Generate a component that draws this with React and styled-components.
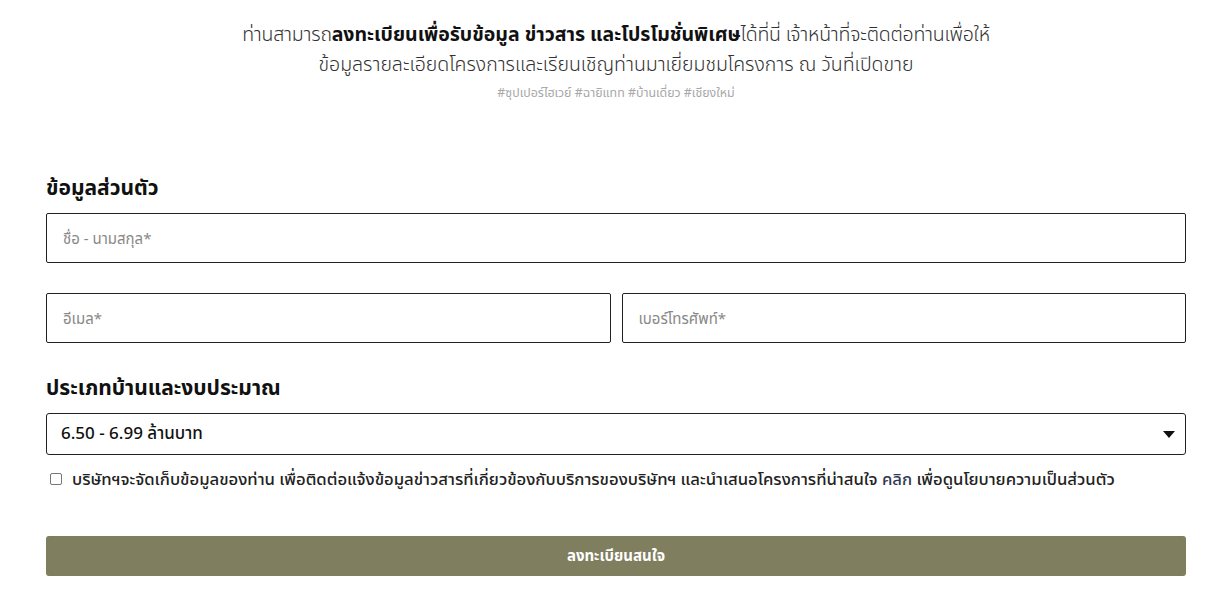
import React from "react";
import styled, { createGlobalStyle } from "styled-components";

const Global = createGlobalStyle`
  body {
    margin: 0;
    background: #fff;
    font-family: "Noto Sans", "Noto Sans Thai", "Leelawadee UI", Tahoma, sans-serif;
    color: #111;
  }
`;

const Page = styled.div`
  width: 1140px;
  margin: 0 auto;
  padding-top: 19px;
`;

const Intro = styled.div`
  text-align: center;
  color: #333;
`;

const IntroLine = styled.p`
  margin: 0;
  font-size: 19.5px;
  line-height: 30px;
  font-weight: 300;
  letter-spacing: ${(p) => (p.$tight ? "-0.2px" : "0")};
  b {
    font-weight: 700;
    color: #111;
    letter-spacing: 0;
  }
`;

const Tags = styled.p`
  margin: 5px 0 0;
  font-size: 12.4px;
  line-height: 18px;
  color: #a8a8a8;
`;

const Heading = styled.h3`
  margin: ${(p) => p.$top}px 0 12px;
  font-size: 21px;
  line-height: 28px;
  font-weight: 700;
  color: #111;
`;

const Input = styled.input`
  box-sizing: border-box;
  width: 100%;
  height: 50px;
  padding: 0 16px;
  border: 1px solid #222;
  border-radius: 2px;
  font-family: inherit;
  font-size: 15px;
  color: #222;
  outline: none;
  &::placeholder {
    color: #888;
  }
`;

const Row = styled.div`
  display: grid;
  grid-template-columns: 1fr 1fr;
  gap: 11px;
  margin-top: 30px;
`;

const SelectBox = styled.div`
  box-sizing: border-box;
  height: 42px;
  border: 1px solid #222;
  border-radius: 3px;
  display: flex;
  align-items: center;
  padding: 0 14px;
  font-size: 17px;
  font-weight: 500;
  color: #111;
`;

const Caret = styled.span`
  margin-left: auto;
  width: 0;
  height: 0;
  border-left: 6px solid transparent;
  border-right: 6px solid transparent;
  border-top: 7px solid #111;
  margin-right: -4px;
`;

const Consent = styled.label`
  display: flex;
  align-items: center;
  gap: 10px;
  margin-top: 12px;
  padding-left: 4px;
  font-size: 16.7px;
  line-height: 23px;
  font-weight: 500;
  color: #222;
`;

const Check = styled.span`
  box-sizing: border-box;
  width: 12px;
  height: 12px;
  border: 1px solid #777;
  border-radius: 2px;
  flex: none;
`;

const Link = styled.a`
  color: #2f3a52;
  text-decoration: none;
`;

const Submit = styled.button`
  display: block;
  width: 100%;
  height: 40px;
  margin-top: 46px;
  border: none;
  border-radius: 3px;
  background: #7f7e5e;
  color: #fff;
  font-family: inherit;
  font-size: 15px;
  font-weight: 700;
`;

export default function App() {
  return (
    <Page>
      <Global />
      <Intro>
        <IntroLine $tight>
          ท่านสามารถ<b>ลงทะเบียนเพื่อรับข้อมูล ข่าวสาร และโปรโมชั่นพิเศษ</b>ได้ที่นี่ เจ้าหน้าที่จะติดต่อท่านเพื่อให้
        </IntroLine>
        <IntroLine>ข้อมูลรายละเอียดโครงการและเรียนเชิญท่านมาเยี่ยมชมโครงการ ณ วันที่เปิดขาย</IntroLine>
        <Tags>#ซุปเปอร์ไฮเวย์ #ฉายิแทท #บ้านเดี่ยว #เชียงใหม่</Tags>
      </Intro>

      <Heading $top={71}>ข้อมูลส่วนตัว</Heading>
      <Input placeholder="ชื่อ - นามสกุล*" />
      <Row>
        <Input placeholder="อีเมล*" />
        <Input placeholder="เบอร์โทรศัพท์*" />
      </Row>

      <Heading $top={30}>ประเภทบ้านและงบประมาณ</Heading>
      <SelectBox>
        6.50 - 6.99 ล้านบาท
        <Caret />
      </SelectBox>

      <Consent>
        <Check />
        <span>
          บริษัทฯจะจัดเก็บข้อมูลของท่าน เพื่อติดต่อแจ้งข้อมูลข่าวสารที่เกี่ยวข้องกับบริการของบริษัทฯ และนำเสนอโครงการที่น่าสนใจ{" "}
          <Link href="#">คลิก</Link> เพื่อดูนโยบายความเป็นส่วนตัว
        </span>
      </Consent>

      <Submit type="button">ลงทะเบียนสนใจ</Submit>
    </Page>
  );
}
